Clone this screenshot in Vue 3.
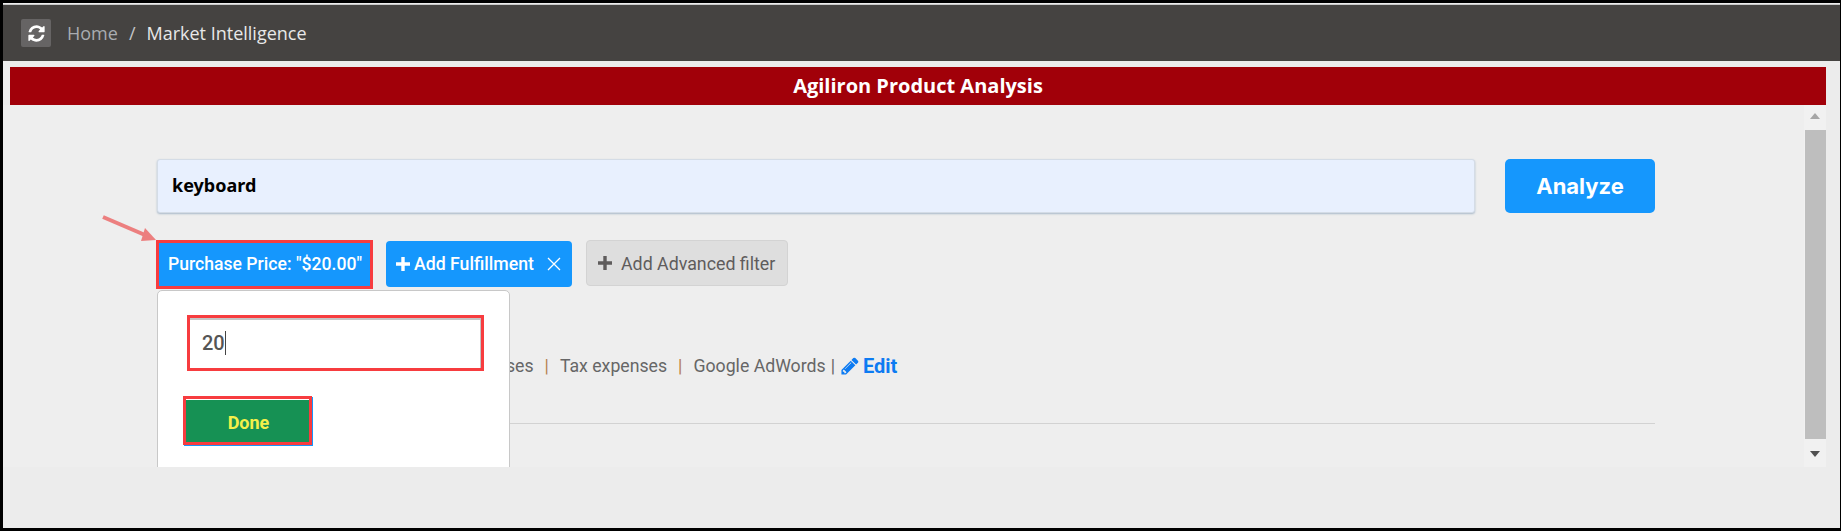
<template>
  <div class="frame">
    <header class="topbar">
      <button class="refresh">
        <svg viewBox="0 0 1792 1792" width="19" height="19"><path fill="#fff" d="M1639 1056q0 5-1 7-64 268-268 434.500t-478 166.500q-146 0-282.500-55t-243.500-157l-129 129q-19 19-45 19t-45-19-19-45v-448q0-26 19-45t45-19h448q26 0 45 19t19 45-19 45l-137 137q71 66 161 102t187 36q134 0 250-65t186-179q11-17 53-117 8-23 30-23h192q13 0 22.500 9.500t9.500 22.500zm25-800v448q0 26-19 45t-45 19h-448q-26 0-45-19t-19-45 19-45l138-138q-148-137-349-137-134 0-250 65t-186 179q-11 17-53 117-8 23-30 23h-199q-13 0-22.500-9.500t-9.500-22.500v-7q65-268 270-434.500t480-166.500q146 0 284 55.500t245 156.500l130-129q19-19 45-19t45 19 19 45z"/></svg>
      </button>
      <span class="crumb">Home</span>
      <span class="sep">/</span>
      <span class="crumb-on">Market Intelligence</span>
    </header>
    <div class="title">Agiliron Product Analysis</div>
    <div class="panel">
      <div class="content">
        <div class="search-row">
          <div class="search">keyboard</div>
          <button class="analyze">Analyze</button>
        </div>
        <div class="chips">
          <div class="chip chip-price">Purchase Price: "$20.00"</div>
          <div class="chip chip-fulfil">
            <svg viewBox="0 0 14 14" width="14" height="14"><path fill="#fff" d="M5.300 0h3.400v5.300H14v3.400H8.700V14H5.300V8.700H0V5.300h5.300z"/></svg>
            <span>Add Fulfillment</span>
            <svg class="close" viewBox="0 0 14 14" width="14" height="14"><path stroke="#fff" stroke-width="1.300" fill="none" d="M1 1l12 12M13 1L1 13"/></svg>
          </div>
          <div class="chip chip-adv">
            <svg viewBox="0 0 14 14" width="14" height="14"><path fill="#5f5c5c" d="M5.300 0h3.400v5.300H14v3.400H8.700V14H5.300V8.700H0V5.300h5.300z"/></svg>
            <span>Add Advanced filter</span>
          </div>
        </div>
        <div class="costs">
          <span>Handling expenses</span><i>|</i>
          <span>Tax expenses</span><i>|</i>
          <span>Google AdWords</span><b>|</b>
          <a class="edit">
            <svg viewBox="0 0 1792 1792" width="20" height="20"><path fill="#0d7bf2" d="M491 1536l91-91-235-235-91 91v107h128v128h107zm523-928q0-22-22-22-10 0-17 7l-542 542q-7 7-7 17 0 22 22 22 10 0 17-7l542-542q7-7 7-17zm-54-192l416 416-832 832h-416v-416zm683 96q0 53-37 90l-166 166-416-416 166-165q36-38 90-38 53 0 91 38l235 234q37 39 37 91z"/></svg>
            Edit
          </a>
        </div>
        <hr class="rule" />

        <div class="popover">
          <div class="pop-input">20<span class="caret"></span></div>
          <button class="done">Done</button>
        </div>

        <svg class="arrow" viewBox="0 0 60 32" width="60" height="32">
          <path d="M2 3l42 18" stroke="#ec7f7f" stroke-width="4" fill="none"/>
          <path d="M55 26L44 14l-4 13z" fill="#ec7f7f"/>
        </svg>
      </div>
      <div class="scrollbar">
        <span class="up"></span>
        <span class="thumb"></span>
        <span class="down"></span>
      </div>
    </div>
  </div>
</template>

<script setup>
</script>

<style>
html, body {
  margin: 0;
  background: #000;
}
</style>

<style scoped>
.frame {
  box-sizing: border-box;
  width: 1841px;
  height: 531px;
  border: 3px solid #000;
  border-right-width: 1px;
  background: #ececec;
  font-family: Roboto, "Liberation Sans", sans-serif;
  overflow: hidden;
}
.topbar {
  height: 57px;
  margin-top: 1px;
  border-top: 1px solid #c9c9c9;
  box-sizing: border-box;
  background: #454341;
  display: flex;
  align-items: center;
  padding-left: 18px;
  font-family: "Open Sans", sans-serif;
  font-size: 18px;
}
.refresh {
  width: 30px;
  height: 28px;
  padding: 0;
  border: 0;
  border-radius: 2px;
  background: #666464;
  display: flex;
  align-items: center;
  justify-content: center;
  margin-right: 16px;
}
.crumb { color: #a9acb0; }
.sep { color: #c4c6c8; margin: 0 11px; }
.crumb-on { color: #e8e8e8; }
.title {
  height: 38px;
  margin: 6px 14px 0 7px;
  background: #a10009;
  color: #fff;
  font-family: "Open Sans", sans-serif;
  font-weight: 700;
  font-size: 20px;
  line-height: 38px;
  text-align: center;
}
.panel {
  display: flex;
  height: 362px;
  margin-right: 14px;
}
.content {
  position: relative;
  flex: 1;
  min-width: 0;
  overflow: hidden;
  padding: 54px 149px 0 154px;
  background: #eee;
}
.search-row {
  display: flex;
  gap: 30px;
}
.search {
  flex: 1;
  height: 54px;
  box-sizing: border-box;
  border: 1px solid #d4dce6;
  border-radius: 3px;
  box-shadow: 0 1px 2px #a9b9c9;
  background: #e8f0fe;
  padding-left: 14px;
  line-height: 50px;
  font-weight: 700;
  font-size: 18px;
  font-family: "Noto Sans", sans-serif;
  color: #000;
}
.analyze {
  width: 150px;
  height: 54px;
  border: 0;
  border-radius: 5px;
  background: #1597fd;
  color: #fff;
  font-family: Inter, sans-serif;
  font-weight: 700;
  font-size: 22px;
}
.chips {
  display: flex;
  align-items: center;
  margin-top: 28px;
  height: 46px;
}
.chip {
  box-sizing: border-box;
  height: 46px;
  display: flex;
  align-items: center;
  font-size: 17.700px;
  font-weight: 500;
}
.chip-price {
  width: 217px;
  height: 49px;
  margin-left: -1px;
  border: 3px solid #f73c3f;
  background: #1597fd;
  color: #fff;
  padding-left: 9px;
  white-space: nowrap;
  font-size: 17.600px;
}
.chip-fulfil {
  width: 186px;
  margin-left: 13px;
  padding-left: 10px;
  border-radius: 4px;
  background: #1597fd;
  color: #fff;
  gap: 4px;
}
.chip-fulfil .close { margin-left: 9px; }
.chip-adv {
  width: 202px;
  margin-left: 14px;
  margin-top: -2px;
  padding-left: 11px;
  gap: 9px;
  border: 1px solid #d3d3d3;
  border-radius: 4px;
  background: #dedede;
  color: #5f5c5c;
  font-weight: 400;
  font-size: 17.800px;
}
.costs {
  margin-top: 67px;
  margin-left: 227px;
  display: flex;
  align-items: center;
  height: 24px;
  font-size: 17.700px;
  color: #666;
  white-space: nowrap;
}
.costs i {
  font-style: normal;
  color: #b5804f;
  margin: 0 11px;
}
.costs b {
  font-weight: 400;
  margin: 0 5px;
}
.edit {
  display: flex;
  align-items: center;
  gap: 3px;
  color: #0d7bf2;
  font-weight: 700;
  font-size: 20px;
}
.rule {
  margin: 45px 0 0;
  border: 0;
  border-top: 1px solid #d2d2d2;
}
.popover {
  position: absolute;
  left: 154px;
  top: 185px;
  width: 353px;
  height: 230px;
  box-sizing: border-box;
  background: #fff;
  border: 1px solid #c8c8c8;
  border-radius: 5px;
}
.pop-input {
  position: absolute;
  left: 29px;
  top: 24px;
  width: 297px;
  height: 56px;
  box-sizing: border-box;
  border: 3px solid #f73c3f;
  box-shadow: inset 0 2px 0 #c4c4c4, inset -1px 0 0 #c4c4c4;
  padding-left: 12px;
  line-height: 50px;
  font-size: 20px;
  font-weight: 500;
  color: #555;
  display: flex;
}
.caret {
  width: 1px;
  height: 24px;
  margin-top: 13px;
  background: #444;
}
.done {
  position: absolute;
  left: 25px;
  top: 105px;
  width: 129px;
  height: 49px;
  box-sizing: border-box;
  border: 3px solid #f73c3f;
  background: #169154;
  color: #f4f04a;
  font-family: Roboto, sans-serif;
  font-size: 18px;
  font-weight: 700;
  padding: 3px 0 0 2px;
  box-shadow: inset 0 1px 0 #fff, 1px 1px 0 #1597fd;
}
.arrow {
  position: absolute;
  left: 98px;
  top: 109px;
}
.scrollbar {
  width: 22px;
  display: flex;
  flex-direction: column;
  align-items: center;
  background: #f1f1f1;
}
.up, .down {
  width: 0;
  height: 0;
  border-left: 5.500px solid transparent;
  border-right: 5.500px solid transparent;
}
.up {
  margin: 8px 0 11px;
  border-bottom: 6px solid #a6a6a6;
}
.down {
  margin-top: 12px;
  border-top: 6px solid #505050;
}
.thumb {
  width: 21px;
  height: 309px;
  background: #bebebe;
}
</style>
